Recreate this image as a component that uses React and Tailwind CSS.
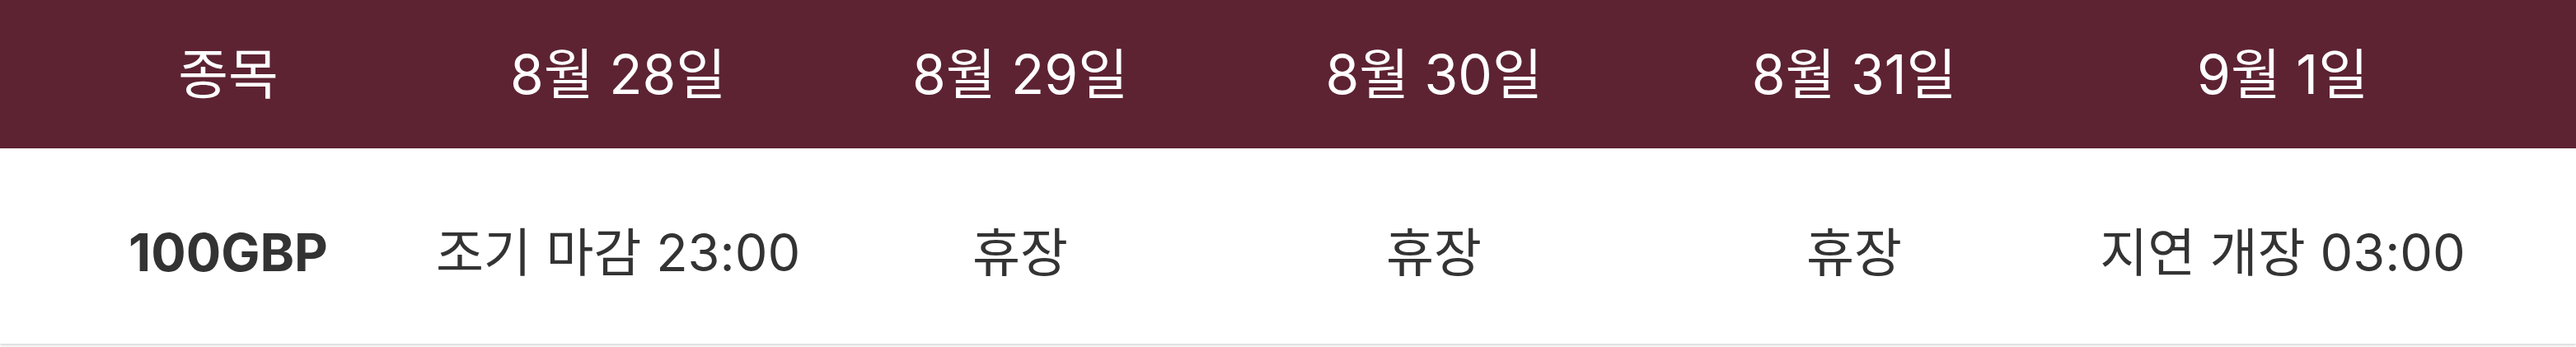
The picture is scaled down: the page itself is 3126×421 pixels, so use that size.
const columns = [
  { head: '종목', value: '100GBP', width: 'w-[554px]', bold: true },
  { head: '8월 28일', value: '조기 마감 23:00', width: 'w-[392px]' },
  { head: '8월 29일', value: '휴장', width: 'w-[584px]' },
  { head: '8월 30일', value: '휴장', width: 'w-[420px]' },
  { head: '8월 31일', value: '휴장', width: 'w-[600px]' },
  { head: '9월 1일', value: '지연 개장 03:00', width: 'w-[440px]' },
];

const App = () => {
  return (
    <div className="w-full bg-white pb-1 font-['Inter','Noto_Sans_CJK_KR',sans-serif]">
      <div className="w-full shadow-[0_2px_3px_rgba(0,0,0,0.16)]">
        {/* Header row */}
        <div className="flex h-[180px] items-center bg-[#5d2333] text-white">
          {columns.map((col) => (
            <div key={col.head} className={`${col.width} flex shrink-0 justify-center whitespace-nowrap text-[66px] leading-[72px]`}>
              {col.head}
            </div>
          ))}
        </div>

        {/* Body row */}
        <div className="flex h-[237px] items-center bg-white pt-[14px] text-[#333333]">
          {columns.map((col) => (
            <div
              key={col.head}
              className={`${col.width} flex shrink-0 justify-center whitespace-nowrap text-[63px] leading-[70px] ${col.bold ? 'font-bold' : 'font-normal'}`}
            >
              {col.value}
            </div>
          ))}
        </div>
      </div>
    </div>
  );
};

export default App;
